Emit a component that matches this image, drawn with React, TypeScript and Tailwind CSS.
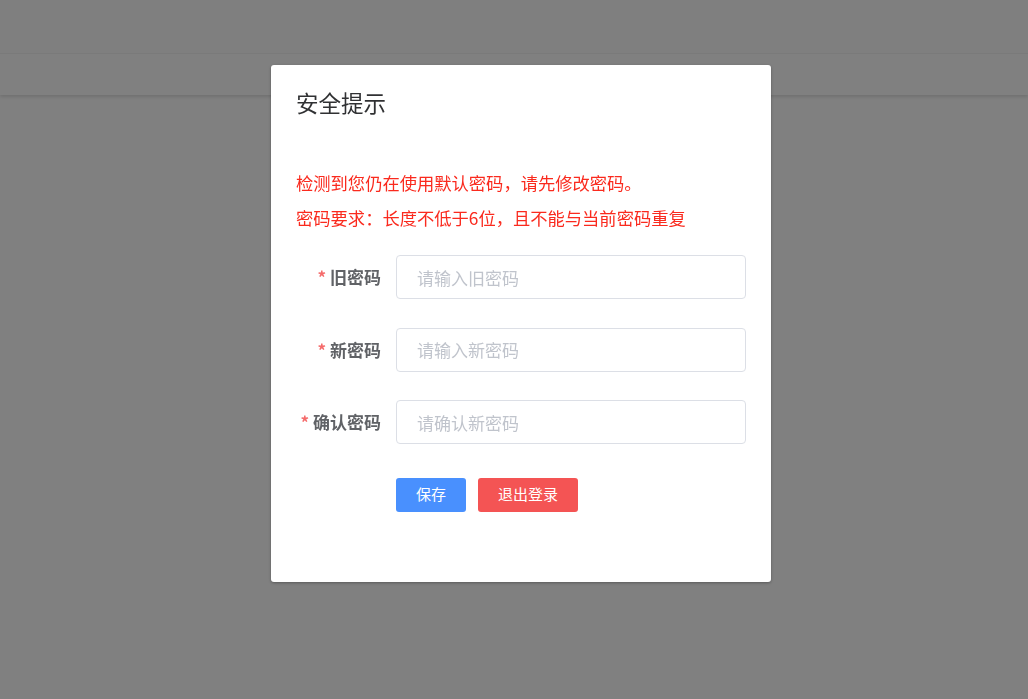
import { useState } from "react"

const FONT = { fontFamily: '"Helvetica Neue", "Noto Sans CJK SC", "Noto Sans", sans-serif' }

const FIELDS = [
  { key: "oldPwd", label: "旧密码", placeholder: "请输入旧密码" },
  { key: "newPwd", label: "新密码", placeholder: "请输入新密码" },
  { key: "confirmPwd", label: "确认密码", placeholder: "请确认新密码" },
]

export default function App() {
  const [form, setForm] = useState<Record<string, string>>({ oldPwd: "", newPwd: "", confirmPwd: "" })

  return (
    <div className="h-[699px] w-full overflow-hidden bg-[#808080]" style={FONT}>
      {/* page behind the mask */}
      <div className="h-[54px] border-b border-[#7b7b7b] bg-[#7f7f7f]" />
      <div className="h-[41px] bg-[#808080] shadow-[0_2px_3px_rgba(0,0,0,0.12)]" />

      {/* dialog */}
      <div className="fixed inset-0 pl-[271px] pt-[65px]">
        <div className="flex w-[500px] flex-col rounded-[3px] bg-white pb-[70px] pt-[25px] shadow-[0_1px_3px_rgba(0,0,0,0.3)]">
          <div className="px-[25px] text-[22.5px] leading-[24px] text-[#303133]">安全提示</div>

          <div className="mt-[51px] px-[25px] text-[17.3px] leading-[35px] text-[#fa2a1e]">
            <div>检测到您仍在使用默认密码，请先修改密码。</div>
            <div>密码要求：长度不低于6位，且不能与当前密码重复</div>
          </div>

          <form className="mt-[20px] flex flex-col gap-[28.5px] pr-[25px]" onSubmit={(e) => e.preventDefault()}>
            {FIELDS.map((f) => (
              <div key={f.key} className="flex items-center">
                <label className="w-[125px] shrink-0 pr-[15px] text-right text-[17px] font-bold text-[#606266]">
                  <span className="mr-[4px] text-[#f56c6c]">*</span>
                  {f.label}
                </label>
                <input
                  type="password"
                  value={form[f.key]}
                  onChange={(e) => setForm((s) => ({ ...s, [f.key]: e.target.value }))}
                  placeholder={f.placeholder}
                  className="h-[44px] flex-1 rounded-[4px] border border-[#dcdfe6] px-[20px] text-[17px] text-[#606266] outline-none placeholder:text-[#c0c4cc]"
                />
              </div>
            ))}

            <div className="mt-[5px] flex gap-[12px] pl-[125px]">
              <button type="submit" className="h-[34px] w-[70px] rounded-[3px] bg-[#4990fe] text-[15px] text-white">保存</button>
              <button type="button" className="h-[34px] w-[100px] rounded-[3px] bg-[#f45454] text-[15px] text-white">退出登录</button>
            </div>
          </form>
        </div>
      </div>
    </div>
  )
}
